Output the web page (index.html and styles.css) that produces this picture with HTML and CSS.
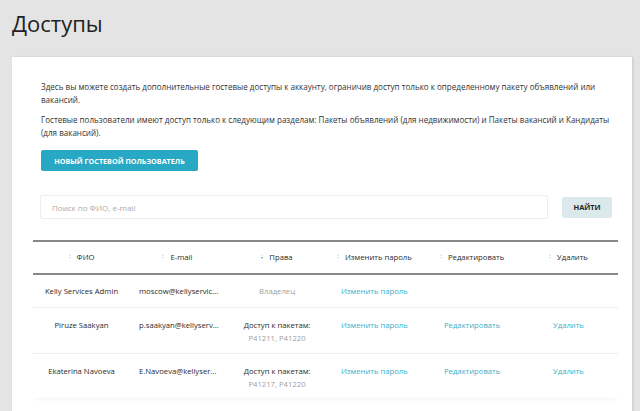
FILE: index.html
```html
<!DOCTYPE html>
<html lang="ru">
<head>
<meta charset="utf-8">
<link rel="stylesheet" href="styles.css">
</head>
<body>
<h1 class="title">Доступы</h1>
<div class="card">
  <p class="intro">Здесь вы можете создать дополнительные гостевые доступы к аккаунту, ограничив доступ только к определенному пакету объявлений или вакансий.</p>
  <p class="intro">Гостевые пользователи имеют доступ только к следующим разделам: Пакеты объявлений (для недвижимости) и Пакеты вакансий и Кандидаты (для вакансий).</p>
  <button class="btn-new">НОВЫЙ ГОСТЕВОЙ ПОЛЬЗОВАТЕЛЬ</button>
  <div class="search">
    <input class="search-input" type="text" placeholder="Поиск по ФИО, e-mail">
    <button class="btn-find">НАЙТИ</button>
  </div>
  <div class="table">
    <div class="row head">
      <div class="cell c1"><span class="sort"><i class="up"></i><i class="down"></i></span>ФИО</div>
      <div class="cell c2h"><span class="sort"><i class="up"></i><i class="down"></i></span>E-mail</div>
      <div class="cell c3"><span class="sort active"><i class="up"></i><i class="down"></i></span>Права</div>
      <div class="cell cl"><span class="sort"><i class="up"></i><i class="down"></i></span>Изменить пароль</div>
      <div class="cell cl"><span class="sort"><i class="up"></i><i class="down"></i></span>Редактировать</div>
      <div class="cell cl"><span class="sort"><i class="up"></i><i class="down"></i></span>Удалить</div>
    </div>
    <div class="row r1">
      <div class="cell c1">Kelly Services Admin</div>
      <div class="cell c2">moscow@kellyservic...</div>
      <div class="cell c3 muted">Владелец</div>
      <div class="cell cl"><a class="link">Изменить пароль</a></div>
      <div class="cell cl"></div>
      <div class="cell cl"></div>
    </div>
    <div class="row r2">
      <div class="cell c1">Piruze Saakyan</div>
      <div class="cell c2">p.saakyan@kellyserv...</div>
      <div class="cell c3">Доступ к пакетам:<br><span class="muted">P41211, P41220</span></div>
      <div class="cell cl"><a class="link">Изменить пароль</a></div>
      <div class="cell cl"><a class="link">Редактировать</a></div>
      <div class="cell cl"><a class="link">Удалить</a></div>
    </div>
    <div class="row r3">
      <div class="cell c1">Ekaterina Navoeva</div>
      <div class="cell c2">E.Navoeva@kellyser...</div>
      <div class="cell c3">Доступ к пакетам:<br><span class="muted">P41217, P41220</span></div>
      <div class="cell cl"><a class="link">Изменить пароль</a></div>
      <div class="cell cl"><a class="link">Редактировать</a></div>
      <div class="cell cl"><a class="link">Удалить</a></div>
    </div>
  </div>
</div>
</body>
</html>
```
FILE: styles.css
```css
html, body {
  margin: 0;
  padding: 0;
  height: 100%;
  overflow: hidden;
}
body {
  background: #e4e4e4;
  font-family: "Open Sans", "Noto Sans", sans-serif;
  color: #333;
  padding: 0 8px 0 12px;
  box-sizing: border-box;
}
.title {
  margin: 0;
  padding-top: 8px;
  height: 57px;
  box-sizing: border-box;
  font-size: 22px;
  font-weight: 400;
  line-height: 30px;
  color: #222;
}
.card {
  background: #fff;
  padding: 23px 20px 20px 21px;
  height: 400px;
  box-shadow: 1px 0 2px rgba(0,0,0,0.12);
}
.intro {
  margin: 0 0 7px 8px;
  font-size: 8.05px;
  line-height: 13px;
  color: #333;
  max-width: 578px;
}
.btn-new {
  margin: 11px 0 0 8px;
  display: block;
  background: #27a8c4;
  color: #fff;
  border: 0;
  border-radius: 2px;
  height: 21px;
  width: 157px;
  padding: 0;
  font-family: inherit;
  font-size: 7.2px;
  font-weight: 700;
}
.search {
  display: flex;
  align-items: center;
  margin: 24px 0 0 7px;
  gap: 14px;
}
.search-input {
  width: 510px;
  height: 24px;
  box-sizing: border-box;
  border: 1px solid #ededed;
  border-radius: 2px;
  padding: 0 0 0 11px;
  font-family: inherit;
  font-size: 8px;
  outline: none;
}
.search-input::placeholder { color: #aaa; }
.btn-find {
  width: 50px;
  height: 21px;
  border: 0;
  border-radius: 2px;
  background: #dce9ec;
  color: #222;
  font-family: inherit;
  font-size: 7.4px;
  font-weight: 700;
  padding: 0;
}
.table {
  margin-top: 21px;
  width: 585px;
}
.row {
  display: grid;
  grid-template-columns: 97px 95px 104px 103px 109px 77px;
  align-items: start;
  font-size: 7.7px;
  line-height: 13px;
  color: #2a2a2a;
}
.row.head {
  border-top: 2px solid #888;
  border-bottom: 2px solid #888;
  height: 35px;
  box-sizing: border-box;
  align-items: center;
}
.row.r1 { height: 33px; border-bottom: 1px solid #eee; box-sizing: border-box; padding-top: 10px; }
.row.r2 { height: 46px; border-bottom: 1px solid #eee; box-sizing: border-box; padding-top: 11px; }
.row.r3 { height: 44px; box-sizing: border-box; padding-top: 11px; box-shadow: 0 3px 4px -2px rgba(0,0,0,0.06); }
.cell { white-space: nowrap; }
.c1 { text-align: center; }
.c2h { text-align: center; }
.c2 { padding-left: 9px; }
.c3 { text-align: center; }
.cl { padding-left: 12px; }
.head .cl { padding-left: 8px; }
.muted { color: #a0a0a0; }
.link { color: #3aaec8; }
.sort {
  display: inline-flex;
  flex-direction: column;
  gap: 1px;
  vertical-align: middle;
  margin-right: 6px;
  position: relative;
  top: -1px;
}
.sort i {
  display: block;
  width: 0;
  height: 0;
  border-left: 1.5px solid transparent;
  border-right: 1.5px solid transparent;
}
.sort .up { border-bottom: 2.5px solid #ddd; }
.sort .down { border-top: 2.5px solid #ddd; }
.sort.active .up { border-bottom-color: #e4e4e4; }
.sort.active .down { border-top-color: #3aaec8; }
```
